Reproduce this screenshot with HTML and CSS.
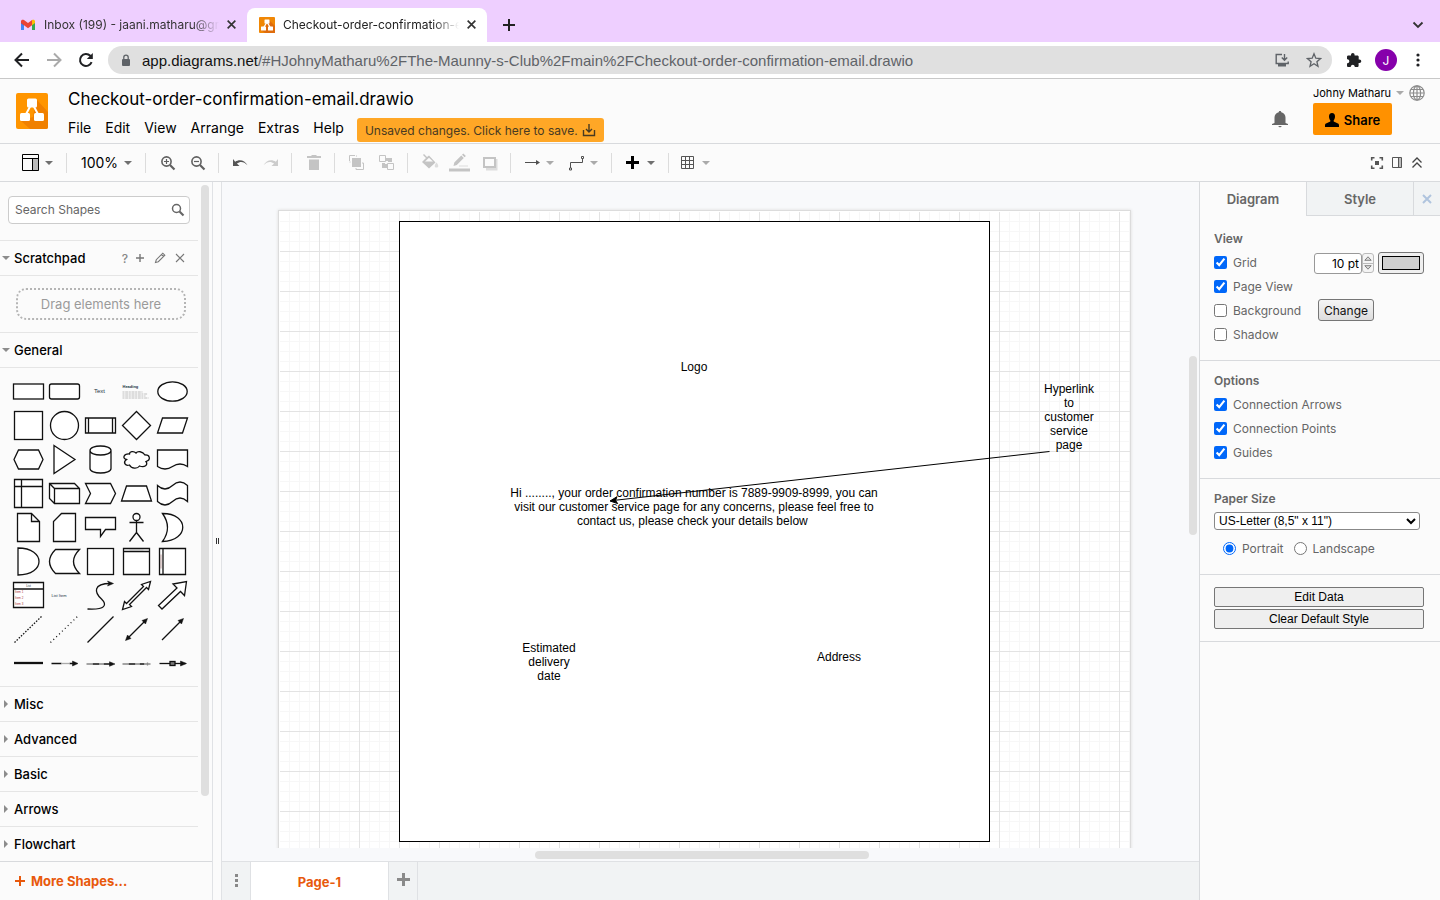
FILE: index.html
```html
<!DOCTYPE html>
<html lang="en">
<head>
<meta charset="utf-8">
<title>Checkout-order-confirmation-email.drawio</title>
<link rel="stylesheet" href="styles.css">
</head>
<body>
<div class="window">
  <div class="tabstrip">
    <div class="tab">
      <svg class="favicon" viewBox="0 0 16 16"><path d="M1 4v9h3V7z" fill="#4285f4"/><path d="M12 7v6h3V4z" fill="#34a853"/><path d="M1 4.200V6l3 2.200V4.600z" fill="#c5221f"/><path d="M1 4.200C1 2.600 2.800 2.200 4 3.100l4 3 4-3v5.100l-4 3-4-3L1 6z" fill="#ea4335"/><path d="M12 3.100v5.100l3-2.200V4.200C15 2.600 13.200 2.200 12 3.100z" fill="#fbbc04"/></svg>
      <span class="tab-title">Inbox (199) - jaani.matharu@gmail.com</span>
      <button class="tab-close" aria-label="Close tab"><svg viewBox="0 0 10 10"><path d="M1.500 1.500l7 7M8.500 1.500l-7 7"/></svg></button>
    </div>
    <div class="tab active">
      <svg class="favicon" viewBox="0 0 16 16"><rect width="16" height="16" rx="1" fill="#f08705"/><path d="M10 3l6 6v7H6l-4-3z" fill="#df6c0c"/><path d="M8 5L4.500 11M8 5l3.500 6" stroke="#fff" stroke-width="1.300"/><rect x="5.500" y="2.500" width="5" height="4" rx=".5" fill="#fff"/><rect x="2" y="9.500" width="5" height="4" rx=".5" fill="#fff"/><rect x="9" y="9.500" width="5" height="4" rx=".5" fill="#fff"/></svg>
      <span class="tab-title">Checkout-order-confirmation-email.drawio</span>
      <button class="tab-close" aria-label="Close tab"><svg viewBox="0 0 10 10"><path d="M1.500 1.500l7 7M8.500 1.500l-7 7"/></svg></button>
    </div>
    <button class="new-tab" aria-label="New tab"><svg viewBox="0 0 14 14"><path d="M7 1v12M1 7h12"/></svg></button>
    <button class="tab-search" aria-label="Search tabs"><svg viewBox="0 0 12 8"><path d="M1.500 1.500L6 6l4.500-4.500"/></svg></button>
  </div>

  <div class="addressbar">
    <button class="nav" aria-label="Back"><svg viewBox="0 0 16 16"><path d="M15 8H2M8 1.500L1.500 8 8 14.500"/></svg></button>
    <button class="nav off" aria-label="Forward"><svg viewBox="0 0 16 16"><path d="M1 8h13M8 1.500L14.500 8 8 14.500"/></svg></button>
    <button class="nav" aria-label="Reload"><svg viewBox="0 0 16 16"><path d="M13.600 10.200A6 6 0 1 1 12.300 3.800L13.500 5"/><path d="M14.800 1v6H8.800z" fill="#202124" stroke="none"/></svg></button>
    <div class="omnibox">
      <svg class="lock" viewBox="0 0 10 13"><rect x="1" y="5" width="8" height="7" rx="1" fill="#5f6368"/><path d="M2.800 5V3.300a2.200 2.200 0 0 1 4.400 0V5" fill="none" stroke="#5f6368" stroke-width="1.300"/></svg>
      <span class="url"><b>app.diagrams.net</b>/#HJohnyMatharu%2FThe-Maunny-s-Club%2Fmain%2FCheckout-order-confirmation-email.drawio</span>
      <svg class="omni-icon" viewBox="0 0 16 16"><path d="M8 2.500H2.200v9h12V9.500M10.500 2v6M7.800 5.500l2.700 2.700 2.700-2.700" fill="none" stroke="#5f6368" stroke-width="1.400"/><rect x="4" y="12" width="8" height="2.500" fill="#5f6368"/></svg>
      <svg class="omni-icon" viewBox="0 0 16 16"><path d="M8 1.800l1.800 4.400 4.700.4-3.600 3.100 1.100 4.600L8 11.800l-4 2.500 1.100-4.600L1.500 6.600l4.700-.4z" fill="none" stroke="#5f6368" stroke-width="1.300"/></svg>
    </div>
    <button class="nav" aria-label="Extensions"><svg viewBox="0 0 16 16"><path d="M13.500 7.500h-.8V4.800c0-.7-.6-1.300-1.300-1.300H8.600v-.8a1.800 1.800 0 0 0-3.600 0v.8H2.300C1.600 3.500 1 4.100 1 4.800v2.500h.8a2 2 0 0 1 0 3.900H1v2.500c0 .7.600 1.300 1.300 1.300h2.500v-.8a2 2 0 0 1 3.900 0v.8h2.600c.7 0 1.300-.6 1.300-1.300v-2.600h.9a1.800 1.800 0 0 0 0-3.600z" fill="#202124" stroke="none"/></svg></button>
    <button class="avatar" aria-label="Profile">J</button>
    <button class="nav" aria-label="Browser menu"><svg viewBox="0 0 16 16"><g fill="#202124" stroke="none"><circle cx="8" cy="3" r="1.600"/><circle cx="8" cy="8" r="1.600"/><circle cx="8" cy="13" r="1.600"/></g></svg></button>
  </div>

  <header class="app-header">
    <svg class="logo" viewBox="0 0 32 36"><rect width="32" height="36" rx="2" fill="#ff9500"/><path d="M20 6l12 13v15a2 2 0 0 1-2 2H14L5 28l12-4z" fill="#f08000"/><path d="M16 10L9 23M16 10l7 13" stroke="#fff" stroke-width="2"/><rect x="11" y="5.500" width="10" height="9" rx="1.500" fill="#fff"/><rect x="4" y="20" width="10" height="8" rx="1.500" fill="#fff"/><rect x="18" y="20" width="10" height="8" rx="1.500" fill="#fff"/></svg>
    <div class="titles">
      <h1>Checkout-order-confirmation-email.drawio</h1>
      <nav class="menu">
        <a href="#">File</a><a href="#">Edit</a><a href="#">View</a><a href="#">Arrange</a><a href="#">Extras</a><a href="#">Help</a>
        <button class="save-note">Unsaved changes. Click here to save.<svg viewBox="0 0 14 14"><path d="M1.500 7v5.500h11V7M7 1v8M4 6l3 3 3-3"/></svg></button>
      </nav>
    </div>
    <svg class="bell" viewBox="0 0 16 18"><path d="M8 1c.8 0 1.200.5 1.300 1.200C12 2.800 13.500 5 13.500 7.500V13l2.500 1v1H0v-1l2.500-1V7.500C2.500 5 4 2.800 6.700 2.200 6.800 1.500 7.200 1 8 1zM6 16h4l-2 1.600z" fill="#666"/></svg>
    <div class="account">
      <div class="user"><a href="#">Johny Matharu</a><svg class="user-caret" viewBox="0 0 8 4"><path d="M0 0h8L4 4z" fill="#aaa"/></svg>
        <svg class="globe" viewBox="0 0 16 16"><g fill="none" stroke="#8c8c8c" stroke-width="1.200"><circle cx="8" cy="8" r="7.200"/><ellipse cx="8" cy="8" rx="3.600" ry="7.200"/><path d="M8 1v14M1 8h14M2 4.500h12M2 11.500h12"/></g></svg></div>
      <button class="share"><svg viewBox="0 0 14 14"><path d="M7 0c2 0 3 1.500 3 3.500C10 5.500 9.300 6.600 8.700 7.200v1.300L13 10.500c.7.400 1 1 1 2V14H0v-1.500c0-1 .3-1.600 1-2l4.300-2V7.200C4.700 6.600 4 5.500 4 3.500 4 1.500 5 0 7 0z"/></svg>Share</button>
    </div>
  </header>

  <div class="toolbar">
    <button class="drop view" aria-label="View layout"><svg viewBox="0 0 46 30"><rect x="18" y="11" width="6" height="12" fill="#bbb"/><path d="M7.500 6.500h16v16h-16zM7.500 10.500h16M17.500 10.500v12" fill="none" stroke="#000"/><path d="M30 13h8l-4 4z" fill="#707070"/></svg></button>
    <i class="sep"></i>
    <button class="zoom-level">100%<svg viewBox="0 0 8 4"><path d="M0 0h8L4 4z" fill="#707070"/></svg></button>
    <i class="sep"></i>
    <button class="tool" aria-label="Zoom in"><svg viewBox="0 0 30 30"><g fill="none" stroke="#606060"><circle cx="13.500" cy="13.500" r="4.600" stroke-width="1.600"/><path d="M17 17l4.500 4.500" stroke-width="2.200"/><path d="M11 13.500h5M13.500 11v5" stroke-width="1.200"/></g></svg></button>
    <button class="tool" aria-label="Zoom out"><svg viewBox="0 0 30 30"><g fill="none" stroke="#606060"><circle cx="13.500" cy="13.500" r="4.600" stroke-width="1.600"/><path d="M17 17l4.500 4.500" stroke-width="2.200"/><path d="M11 13.500h5" stroke-width="1.200"/></g></svg></button>
    <i class="sep"></i>
    <button class="tool" aria-label="Undo"><svg viewBox="0 0 30 30"><path d="M7 11v7h6.500l-2.600-2.400c3.500-2.800 7.200-2 10.600 1.700-2.600-5-8-6.700-12.300-3.600z" fill="#555"/></svg></button>
    <button class="tool" aria-label="Redo"><svg viewBox="0 0 30 30"><path d="M22 11v7h-6.500l2.600-2.400c-3.500-2.800-7.200-2-10.600 1.700 2.600-5 8-6.700 12.300-3.600z" fill="#ccc"/></svg></button>
    <i class="sep"></i>
    <button class="tool" aria-label="Delete"><svg viewBox="0 0 30 30"><path d="M8 8h4l1-1h4l1 1h4v2H8zM10 11.500h10V22H10z" fill="#c4c4c4"/></svg></button>
    <i class="sep"></i>
    <button class="tool" aria-label="To front"><svg viewBox="0 0 30 30"><rect x="10" y="10" width="9" height="9" fill="#c4c4c4"/><path d="M7.500 13V7.500H13M16 21.500h5.500V16M14.500 7.500v1M7.500 14h1M14 20v1.500h2M20 15h1.500v2" fill="none" stroke="#c4c4c4"/></svg></button>
    <button class="tool" aria-label="To back"><svg viewBox="0 0 30 30"><path d="M14 10h6v4h-4v-1h-2zM10 15h3v1h2v4h-5z" fill="#c4c4c4"/><path d="M7.500 7.500h6v6h-6zM15.500 15.500h6v6h-6z" fill="none" stroke="#c4c4c4"/></svg></button>
    <i class="sep"></i>
    <button class="tool" aria-label="Fill color"><svg viewBox="0 0 30 30"><path d="M9 6l3 3 2-1.500 6.500 7L14 20.500 7 14l4-4-3-3z" fill="#c4c4c4"/><path d="M10 13.500h8L14 9.800z" fill="#fbfbfb"/><path d="M21.500 14.500c2.500 3 2.200 5 0 5s-2.500-2 0-5z" fill="#ddd"/></svg></button>
    <button class="tool" aria-label="Line color"><svg viewBox="0 0 30 30"><path d="M8.500 18l.8-3.500 7-7 2.500 2.500-7 7zM17 6.800l1.300-1.300 2.600 2.500-1.300 1.300z" fill="#c4c4c4"/><path d="M14 18h9" stroke="#ddd"/><path d="M4 20.500h21v3H4z" fill="#c4c4c4"/></svg></button>
    <button class="tool" aria-label="Shadow"><svg viewBox="0 0 30 30"><path d="M11 20h9v-9h2.500v11.500H11z" fill="#ddd"/><rect x="9" y="10" width="11" height="9" fill="none" stroke="#c4c4c4" stroke-width="2"/></svg></button>
    <i class="sep"></i>
    <button class="drop" aria-label="Connection"><svg viewBox="0 0 44 30"><path d="M7 14.500h13" stroke="#505050"/><path d="M18 12l4 2.500-4 2.500z" fill="#505050"/><path d="M28 13h8l-4 4z" fill="#aaa"/></svg></button>
    <button class="drop" aria-label="Waypoints"><svg viewBox="0 0 44 30"><path d="M8.500 20v-5.500h12V11M7.500 20h2v2h-2zM19.500 8.500h2v2h-2z" fill="none" stroke="#505050"/><path d="M28 13h8l-4 4z" fill="#aaa"/></svg></button>
    <i class="sep"></i>
    <button class="drop" aria-label="Insert"><svg viewBox="0 0 44 30"><path d="M7 14.500h13M13.500 8v13" stroke="#000" stroke-width="3"/><path d="M28 13h8l-4 4z" fill="#707070"/></svg></button>
    <i class="sep"></i>
    <button class="drop" aria-label="Table"><svg viewBox="0 0 44 30"><path d="M5.500 8.500h12v12h-12zM9.500 8.500v12M13.500 8.500v12M5.500 12.500h12M5.500 16.500h12" fill="none" stroke="#555"/><path d="M26 13h8l-4 4z" fill="#aaa"/></svg></button>
    <div class="toolbar-end">
      <button aria-label="Fullscreen"><svg viewBox="0 0 14 14"><path d="M1.700 4.500V1.700h2.800M9.500 1.700h2.800v2.800M12.300 9.500v2.800H9.500M4.500 12.300H1.700V9.500" fill="none" stroke="#555" stroke-width="1.600"/><path d="M5 5h4v4H5z" fill="#555"/></svg></button>
      <button aria-label="Format panel"><svg viewBox="0 0 14 14"><path d="M9 2h3v10H9z" fill="#bbb"/><path d="M2.500 1.500h9v10h-9zM8.500 1.500v10" fill="none" stroke="#555"/></svg></button>
      <button aria-label="Collapse"><svg viewBox="0 0 14 14"><path d="M2.500 6.500L7 2 11.500 6.500M2.500 11.500L7 7 11.500 11.500" fill="none" stroke="#444" stroke-width="1.300"/></svg></button>
    </div>
  </div>

  <main class="workspace">
    <aside class="sidebar">
      <div class="sidebar-scroll">
        <div class="search"><input type="text" placeholder="Search Shapes" aria-label="Search Shapes"><svg viewBox="0 0 14 14"><circle cx="5.500" cy="5.500" r="4" fill="none" stroke="#666" stroke-width="1.500"/><path d="M8.500 8.500l4 4" stroke="#666" stroke-width="2.200"/></svg></div>
        <div class="section-head"><svg class="tri" viewBox="0 0 8 8"><path d="M0 2h8L4 6z"/></svg><span>Scratchpad</span>
          <div class="head-tools"><button>?</button>
            <button aria-label="Add"><svg viewBox="0 0 12 12"><path d="M6 2v8M2 6h8" stroke-width="1.400"/></svg></button>
            <button aria-label="Edit"><svg viewBox="0 0 12 12"><path d="M1.500 10.500l.8-2.800L8.800 1.200l2 2-6.500 6.500zM7.500 2.500l2 2" /></svg></button>
            <button aria-label="Close"><svg viewBox="0 0 12 12"><path d="M2 2l8 8M10 2l-8 8"/></svg></button></div>
        </div>
        <div class="drop-area">Drag elements here</div>
        <div class="section-head"><svg class="tri" viewBox="0 0 8 8"><path d="M0 2h8L4 6z"/></svg><span>General</span></div>
        <div class="shapes">
          <svg viewBox="-18.500 -17.500 36 34"><rect x="-15" y="-7.500" width="30" height="15"/></svg>
          <svg viewBox="-18.500 -17.500 36 34"><rect x="-15" y="-7.500" width="30" height="15" rx="2"/></svg>
          <svg viewBox="-18.500 -17.500 36 34"><text x="-1" y="1.500" text-anchor="middle" font-size="6">Text</text></svg>
          <svg viewBox="-18.500 -17.500 36 34"><text x="-14" y="-4" font-size="4" font-weight="700">Heading</text><path d="M-14 .5h20M-14 2.500h25M-14 4.500h23M-14 6.500h26" stroke="#999" stroke-width=".6" stroke-dasharray="2 .7 3 .6"/></svg>
          <svg viewBox="-18.500 -17.500 36 34"><ellipse rx="14.700" ry="9.700"/></svg>

          <svg viewBox="-18.500 -17.500 36 34"><rect x="-14" y="-14" width="28" height="28"/></svg>
          <svg viewBox="-18.500 -17.500 36 34"><circle r="14"/></svg>
          <svg viewBox="-18.500 -17.500 36 34"><path d="M-15-7.500h30v15h-30zM-12-7.500v15M12-7.500v15"/></svg>
          <svg viewBox="-18.500 -17.500 36 34"><path d="M0-14L14 0 0 14-14 0z"/></svg>
          <svg viewBox="-18.500 -17.500 36 34"><path d="M-10-7.500h25l-5 15h-25z"/></svg>

          <svg viewBox="-18.500 -17.500 36 34"><path d="M-10-9.500h20l4.500 9.500-4.500 9.500h-20L-14.500 0z"/></svg>
          <svg viewBox="-18.500 -17.500 36 34"><path d="M-10.500-14L10.500 0-10.500 14z"/></svg>
          <svg viewBox="-18.500 -17.500 36 34"><path d="M-10.500-9v18c0 6 21 6 21 0v-18c0-6-21-6-21 0c0 6 21 6 21 0"/></svg>
          <svg viewBox="-18.500 -17.500 36 34"><path d="M-7-5.500C-13-6-14.500-1-10 0c-4 3-1 7 3 5.500 2 4 8 4 10 1 5 2 9-1 6.500-4.500C15 0 13-5 8.500-4.500 6-8.500 1-8.500-.5-6.500-3-9-7-8-7-5.500z"/></svg>
          <svg viewBox="-18.500 -17.500 36 34"><path d="M-15-9.500h30V7Q7.500 2 0 7t-15 0z"/></svg>

          <svg viewBox="-18.500 -17.500 36 34"><path d="M-14-14h28v28h-28zM-7-14v28M-14-7h28"/></svg>
          <svg viewBox="-18.500 -17.500 36 34"><path d="M-15-10h25l5 5v15h-25l-5-5zM-15-10l5 5h25M-10-5v15"/></svg>
          <svg viewBox="-18.500 -17.500 36 34"><path d="M-15-10h25l5 10-5 10h-25l5-10z"/></svg>
          <svg viewBox="-18.500 -17.500 36 34"><path d="M-10-7.500h20l5 15h-30z"/></svg>
          <svg viewBox="-18.500 -17.500 36 34"><path d="M-15-8Q-7.500-1 0-8T15-8V8Q7.500 1 0 8t-15 0z"/></svg>

          <svg viewBox="-18.500 -17.500 36 34"><path d="M-11-14H3l8 8v20h-22zM3-14v8h8"/></svg>
          <svg viewBox="-18.500 -17.500 36 34"><path d="M-3-14h14v28h-22V-6z"/></svg>
          <svg viewBox="-18.500 -17.500 36 34"><path d="M-15-10h30V2H5L0 9V2h-15z"/></svg>
          <svg viewBox="-18.500 -17.500 36 34"><circle cy="-10.500" r="3.500"/><path d="M0-7V5M-7-5H7M0 5l-7 9M0 5l7 9"/></svg>
          <svg viewBox="-18.500 -17.500 36 34"><path d="M-10-14C17-14 17 13-10 14Q0 0-10-14z"/></svg>

          <svg viewBox="-18.500 -17.500 36 34"><path d="M-10.500-13.500c28 0 28 27 0 27z"/></svg>
          <svg viewBox="-18.500 -17.500 36 34"><path d="M-9-12h24Q3 0 15 12H-9Q-21 0-9-12z"/></svg>
          <svg viewBox="-18.500 -17.500 36 34"><rect x="-13" y="-13" width="26" height="26"/></svg>
          <svg viewBox="-18.500 -17.500 36 34"><path d="M-13-13h26v26h-26zM-13-10h26"/><path d="M-7-11.500H7" stroke="#999" stroke-width=".6"/></svg>
          <svg viewBox="-18.500 -17.500 36 34"><path d="M-13-13h26v26h-26zM-9.500-13v26"/><path d="M-11.500-7V7" stroke="#966" stroke-width=".6"/></svg>

          <svg viewBox="-18.500 -17.500 36 34"><path d="M-15-13h30v25h-30zM-15-6.500h30"/><text x="0" y="-8.500" text-anchor="middle" font-size="3">List</text><g class="items" font-size="3"><text x="-13.500" y="-2.500">Item 1</text><text x="-13.500" y="3.500">Item 2</text><text x="-13.500" y="9.500">Item 3</text></g></svg>
          <svg viewBox="-18.500 -17.500 36 34"><text x="-13" y="1.500" font-size="4">List Item</text></svg>
          <svg viewBox="-18.500 -17.500 36 34"><path class="open" d="M-13 13.500c18 1 20-4 14-10C-6-3-8-12 10-12"/><path class="solid" d="M13-12l-6-2.500 1.500 2.500L7-9.500z"/></svg>
          <svg viewBox="-18.500 -17.500 36 34"><path d="M14-14l-2 8-2-2L-7 9l2 2-9 3 2-8 2 2L7-9l-2-2z"/></svg>
          <svg viewBox="-18.500 -17.500 36 34"><path d="M14-14l-2 14-4-4-18.500 17.500-3.500-3.500L4.500-7.500.5-11.500z"/></svg>

          <svg viewBox="-18.500 -17.500 36 34"><path d="M-14 13L13-13" stroke-dasharray="1.500 1.500"/></svg>
          <svg viewBox="-18.500 -17.500 36 34"><path d="M-14 13L13-13" stroke-dasharray="1 3"/></svg>
          <svg viewBox="-18.500 -17.500 36 34"><path d="M-13 13L13-13"/></svg>
          <svg viewBox="-18.500 -17.500 36 34"><path d="M-9 9L9-9"/><path class="solid" d="M11-11l-5.500 2L9-5.500zM-11 11l5.500-2L-9 5.500z"/></svg>
          <svg viewBox="-18.500 -17.500 36 34"><path d="M-10.500 10.500L9-9"/><path class="solid" d="M11-11l-5.500 2L9-5.500z"/></svg>

          <svg viewBox="-18.500 -17.500 36 34"><path d="M-14.500-.5h29" stroke-width="2.300"/></svg>
          <svg viewBox="-18.500 -17.500 36 34"><path d="M-13 0h10M5 0h6"/><path d="M-3 0h8" stroke="#aaa"/><path class="solid" d="M13.500 0L8-2.500V2.500z"/></svg>
          <svg viewBox="-18.500 -17.500 36 34"><path d="M-8 .5h7M3 .5h8"/><path d="M-14 .5h6M-1 .5h4" stroke="#888"/><path class="solid" d="M14.500.5L9-1.800V2.800z"/></svg>
          <svg viewBox="-18.500 -17.500 36 34"><path d="M-8 .5h7M3 .5h5"/><path d="M-14 .5h6M-1 .5h4M8 .5h6M11-1v3" stroke="#888"/></svg>
          <svg viewBox="-18.500 -17.500 36 34"><path d="M-13 0h26"/><rect x="-2.500" y="-2" width="5" height="4" fill="#777"/><path class="solid" d="M14 0L8-2.500V2.500z"/></svg>
        </div>
        <div class="section-head"><svg class="tri" viewBox="0 0 8 8"><path d="M2 0l4 4-4 4z"/></svg><span>Misc</span></div>
        <div class="section-head"><svg class="tri" viewBox="0 0 8 8"><path d="M2 0l4 4-4 4z"/></svg><span>Advanced</span></div>
        <div class="section-head"><svg class="tri" viewBox="0 0 8 8"><path d="M2 0l4 4-4 4z"/></svg><span>Basic</span></div>
        <div class="section-head"><svg class="tri" viewBox="0 0 8 8"><path d="M2 0l4 4-4 4z"/></svg><span>Arrows</span></div>
        <div class="section-head"><svg class="tri" viewBox="0 0 8 8"><path d="M2 0l4 4-4 4z"/></svg><span>Flowchart</span></div>
      </div>
      <div class="scroll-thumb side"></div>
      <button class="more"><svg viewBox="0 0 10 10"><path d="M5 0v10M0 5h10"/></svg>More Shapes...</button>
    </aside>
    <div class="splitter"><i></i><i></i></div>

    <section class="center">
      <div class="canvas">
        <div class="viewport">
          <div class="paper">
            <div class="frame"></div>
            <p class="node logo-text">Logo</p>
            <p class="node link-text">Hyperlink to customer service page</p>
            <p class="node body-text">Hi ........, your order confirmation number is 7889-9909-8999, you can visit our customer service page for any concerns, please feel free to contact us, please check your details below&nbsp;</p>
            <p class="node date-text">Estimated delivery date</p>
            <p class="node address-text">Address</p>
            <svg class="edge" viewBox="0 0 850 640"><path d="M770.500 240.500L334 289.500" stroke="#000"/><path d="M331 290l7-4.300-1.500 3.700 2.200 3.200z" stroke="#000"/></svg>
          </div>
        </div>
        <div class="scroll-thumb vert"></div>
        <div class="scroll-thumb horiz"></div>
      </div>
      <div class="pagebar">
        <button class="page-menu" aria-label="Pages"><svg viewBox="0 0 4 14"><path d="M1 0h3v3H1zM1 5h3v3H1zM1 10h3v3H1z"/></svg></button>
        <button class="page-tab">Page-1</button>
        <button class="page-add" aria-label="Insert page"><svg viewBox="0 0 14 14"><path d="M7.500 0v13M1 6.500h13" stroke="#8a8a8a" stroke-width="3"/></svg></button>
      </div>
    </section>

    <aside class="format">
      <div class="format-tabs"><button class="on">Diagram</button><button>Style</button><button class="x" aria-label="Close panel"><svg viewBox="0 0 10 10"><path d="M1 1l8 8M9 1l-8 8"/></svg></button></div>
      <section class="view-set">
        <h2>View</h2>
        <div class="row"><label><input type="checkbox" checked>Grid</label>
          <span class="grid-set"><input class="size" type="text" value="10 pt" aria-label="Grid size"><span class="spin"><button aria-label="Increase"><svg viewBox="0 0 8 5"><path d="M.8 4.300h6.400L4 .8z"/></svg></button><button aria-label="Decrease"><svg viewBox="0 0 8 5"><path d="M.8.7h6.400L4 4.200z"/></svg></button></span><button class="swatch" aria-label="Grid color"><i></i></button></span></div>
        <div class="row"><label><input type="checkbox" checked>Page View</label></div>
        <div class="row"><label><input type="checkbox">Background</label><button class="change">Change</button></div>
        <div class="row"><label><input type="checkbox">Shadow</label></div>
      </section>
      <section>
        <h2>Options</h2>
        <div class="row"><label><input type="checkbox" checked>Connection Arrows</label></div>
        <div class="row"><label><input type="checkbox" checked>Connection Points</label></div>
        <div class="row"><label><input type="checkbox" checked>Guides</label></div>
      </section>
      <section>
        <h2 id="paper">Paper Size</h2>
        <select aria-labelledby="paper"><option>US-Letter (8,5" x 11")</option></select>
        <div class="row radios"><label><input type="radio" name="o" checked>Portrait</label><label><input type="radio" name="o">Landscape</label></div>
      </section>
      <section class="actions"><button>Edit Data</button><button>Clear Default Style</button></section>
    </aside>
  </main>
</div>
</body>
</html>
```
FILE: styles.css
```css
* { box-sizing: border-box; }
body { margin: 0; font-family: Inter, "Liberation Sans", sans-serif; color: #000; background: #fbfbfb; }
button { font: inherit; color: inherit; border: 0; padding: 0; background: none; }
a { color: inherit; text-decoration: none; }
svg { display: block; flex: none; }
h1, h2, p { margin: 0; }

.window { height: 100vh; display: flex; flex-direction: column; overflow: hidden; }

/* browser chrome */
.tabstrip { flex: none; height: 42px; padding: 8px 16px 0 7px; display: flex; background: #eecfff; }
.tab { width: 240px; padding: 0 10px 1px 13px; display: flex; align-items: center; font-size: 12px; color: #333; }
.tab.active { padding-left: 12px; background: #fff; border-radius: 8px 8px 0 0; color: #222; }
.favicon { width: 16px; height: 16px; margin-right: 8px; }
.tab-title { flex: 1; min-width: 0; overflow: hidden; white-space: nowrap; mask-image: linear-gradient(to right, #000 85%, transparent); }
.tab-close { width: 14px; display: flex; justify-content: flex-end; margin-left: 4px; }
.tab-close svg { width: 11px; height: 11px; stroke: #333; stroke-width: 1.5; fill: none; }
.new-tab { width: 14px; margin-left: 15px; }
.new-tab svg { width: 14px; height: 14px; stroke: #222; stroke-width: 2; }
.tab-search { margin-left: auto; }
.tab-search svg { width: 12px; height: 8px; fill: none; stroke: #333; stroke-width: 1.8; }
.addressbar { flex: none; height: 37px; padding: 0 14px; display: flex; align-items: center; gap: 16px; background: #fff; border-bottom: 1px solid #c8c8c8; }
.nav svg { width: 16px; height: 16px; fill: none; stroke: #202124; stroke-width: 2; }
.nav.off svg { stroke: #aaa; }
.omnibox { flex: 1; height: 28px; margin: 0 -2px 0 -2px; padding: 0 10px 0 13px; display: flex; align-items: center; border-radius: 14px; background: #e0e0e0; font: 15px "Liberation Sans", Arial, sans-serif; color: #5f6368; }
.omnibox b { font-weight: 400; color: #111; }
.lock { width: 10px; height: 13px; margin-right: 11px; }
.url { flex: 1; white-space: nowrap; overflow: hidden; }
.omni-icon { width: 16px; height: 16px; margin-left: 16px; }
.avatar { width: 22px; height: 22px; margin: 0 -3px; border-radius: 50%; background: #8600ab; color: #fff; font-size: 12px; }

/* document header */
.app-header { flex: none; height: 65px; padding: 7px 17px 0 16px; display: flex; border-bottom: 1px solid #d8dadd; }
.logo { width: 32px; height: 36px; margin: 7px 20px 0 0; }
.titles { flex: 1; }
h1 { font-size: 17px; font-weight: 400; line-height: 26px; }
.menu { display: flex; align-items: center; gap: 14px; height: 24px; margin-top: 3px; font-size: 14px; }
.save-note { height: 24px; margin: 6px 0 0 -1px; padding: 0 8px; display: flex; align-items: center; gap: 4px; border-radius: 3px; background: #ffa726; color: #483a22; font-size: 12px; }
.save-note svg { width: 14px; height: 14px; fill: none; stroke: #483a22; stroke-width: 1.4; }
.bell { width: 16px; height: 18px; margin: 24px 25px 0 0; }
.account { width: 110px; }
.user { display: flex; align-items: center; justify-content: space-between; height: 17px; margin-right: -2px; padding-bottom: 3px; font-size: 11px; }
.user-caret { width: 8px; height: 4px; }
.globe { width: 16px; height: 16px; }
.share { width: 79px; height: 32px; padding-top: 1px; display: flex; align-items: center; justify-content: center; gap: 5px; border-radius: 2px; background: #ff9100; font-size: 13px; font-weight: 600; }
.share svg { width: 14px; height: 14px; }

/* toolbar */
.toolbar { flex: none; height: 38px; padding: 0 16px 0 15px; display: flex; align-items: center; border-bottom: 1px solid #d8dadd; }
.sep { flex: none; width: 1px; height: 20px; margin: 0 7px 0 5px; background: #dcdcdc; }
.tool svg { width: 30px; height: 30px; }
.drop svg { width: 44px; height: 30px; }
.drop.view svg { width: 46px; }
.drop.view { margin-right: 0; }
.zoom-level { width: 66px; padding: 0 8px 0 7px; display: flex; align-items: center; justify-content: space-between; font-size: 14px; }
.zoom-level svg { width: 8px; height: 4px; }
.toolbar-end { margin-left: auto; display: flex; gap: 6px; }
.toolbar-end svg { width: 14px; height: 14px; }

/* shape sidebar */
.workspace { flex: 1; min-height: 0; display: flex; }
.sidebar { flex: none; width: 212px; display: flex; flex-direction: column; position: relative; }
.sidebar-scroll { flex: 1; min-height: 0; overflow: hidden; width: 198px; }
.search { margin: 14px 8px 16px; height: 28px; width: 182px; display: flex; align-items: center; padding: 0 4px 1px 0; border: 1px solid #ccc; border-radius: 4px; background: #fff; }
.search input { flex: 1; min-width: 0; border: 0; padding: 0 6px; outline: 0; background: none; font: 12px Inter, sans-serif; }
.search input::placeholder { color: #666; }
.search svg { width: 14px; height: 14px; }
.section-head { height: 35px; padding: 0 12px 0 2px; display: flex; align-items: center; gap: 4px; border-top: 1px solid #e5e5e5; font-size: 13px; font-weight: 500; }
.tri { width: 8px; height: 8px; fill: #8c8c8c; }
.head-tools { margin-left: auto; display: flex; align-items: center; gap: 8px; color: #888; font-size: 12px; }
.head-tools svg { width: 12px; height: 12px; fill: none; stroke: #777; stroke-width: 1.1; }
.head-tools button:first-child { margin-right: -2px; }
.drop-area { position: relative; height: 57px; padding: 12px 12px 12px 16px; border-top: 1px solid #e5e5e5; display: grid; place-items: center; font-size: 13px; color: #9a9a9a; }
.drop-area::before { content: ""; position: absolute; inset: 12px 12px 12px 16px; border: 2px dotted #b5b5b5; border-radius: 10px; }
.shapes { padding: 6px 0 6px 10px; display: grid; grid-template-columns: repeat(5, 36px); border-top: 1px solid #e5e5e5; font-family: "Liberation Sans", sans-serif; }
.shapes svg { width: 36px; height: 34px; fill: #fff; stroke: #111; stroke-width: 1.3; }
.shapes text { fill: #234; stroke: none; }
.shapes .items text { fill: #a33; }
.shapes .open { fill: none; }
.shapes .solid { fill: #111; stroke-width: .5; }
.scroll-thumb { position: absolute; border-radius: 4px; background: #dfdfdf; }
.scroll-thumb.side { top: 3px; right: 3px; width: 8px; height: 611px; }
.more { flex: none; height: 39px; padding-left: 15px; display: flex; align-items: center; gap: 6px; border-top: 1px solid #d8dadd; color: #e8590c; font-size: 13px; font-weight: 700; }
.more svg { width: 10px; height: 10px; stroke: #e8590c; stroke-width: 2; }
.splitter { flex: none; width: 10px; border: solid #e0e2e5; border-width: 0 1px; display: flex; align-items: center; justify-content: center; gap: 1px; }
.splitter i { width: 1px; height: 6px; background: #333; }

/* drawing canvas */
.center { flex: 1; min-width: 0; display: flex; flex-direction: column; }
.canvas { flex: 1; min-height: 0; position: relative; padding-bottom: 13px; background: #f8f9fb; }
.viewport { height: 100%; overflow: hidden; position: relative; }
.paper { position: absolute; left: 57px; top: 29px; width: 851px; height: 1100px; box-shadow: 0 0 0 1px #dcdcdc, 0 0 3px 1px #ddd;
  background:
    linear-gradient(#fff, #fff) 0 0 / 100% 1px no-repeat,
    linear-gradient(#fff, #fff) 0 0 / 1px 100% no-repeat,
    linear-gradient(to right, #e3e3e3 1px, transparent 1px) 0 0 / 40px 40px,
    linear-gradient(#e3e3e3 1px, transparent 1px) 0 0 / 40px 40px,
    linear-gradient(to right, #f7f7f7 1px, transparent 1px) 0 0 / 10px 10px,
    linear-gradient(#f7f7f7 1px, transparent 1px) 0 0 / 10px 10px, #fff; }
.frame { position: absolute; left: 120px; top: 10px; width: 591px; height: 621px; border: 1px solid #000; background: #fff; }
.node { position: absolute; font: 12px/14px "Liberation Sans", Arial, sans-serif; text-align: center; }
.logo-text { left: 395px; top: 149px; width: 40px; }
.link-text { left: 760px; top: 171px; width: 60px; }
.body-text { left: 225px; top: 275px; width: 380px; }
.date-text { left: 240px; top: 430px; width: 60px; }
.address-text { left: 530px; top: 439px; width: 60px; }
.edge { position: absolute; left: 0; top: 0; width: 850px; height: 640px; }
.scroll-thumb.vert { right: 2px; top: 174px; width: 8px; height: 179px; }
.scroll-thumb.horiz { left: 313px; bottom: 2px; width: 334px; height: 8px; }
.pagebar { flex: none; height: 39px; display: flex; background: #f1f3f4; border-top: 1px solid #dfe1e4; }
.pagebar button { border-right: 1px solid #dfe1e4; display: flex; align-items: center; justify-content: center; }
.page-menu { width: 29px; }
.page-menu svg { width: 4px; height: 14px; fill: #888; }
.page-tab { width: 138px; padding-top: 2px; background: #fff; color: #e8590c; font-size: 13px; font-weight: 700; }
.page-add { width: 29px; }
.page-add svg { width: 14px; height: 14px; margin-bottom: 2px; }

/* format panel */
.format { flex: none; width: 241px; border-left: 1px solid #d8dadd; font-size: 12px; color: #666; }
.format-tabs { display: flex; height: 34px; }
.format-tabs button { flex: 1; border: solid #d8dadd; border-width: 0 0 1px 1px; background: #f1f3f4; font-size: 13px; font-weight: 600; }
.format-tabs .on { background: none; border: 0; }
.format-tabs .x { flex: none; width: 27px; display: grid; place-items: center; }
.x svg { width: 10px; height: 10px; stroke: #b0c4de; stroke-width: 2; }
.format section { padding: 10px 14px 14px; border-bottom: 1px solid #d8dadd; }
.format .view-set { padding-top: 13px; }
h2 { height: 20px; margin-bottom: 1px; font-size: 12px; line-height: 20px; font-weight: 600; }
.row { height: 24px; display: flex; align-items: center; justify-content: space-between; }
.row label { display: flex; align-items: center; gap: 6px; }
.row input[type="checkbox"], .row input[type="radio"] { width: 13px; height: 13px; margin: 0; accent-color: #0067f9; }
.grid-set { display: flex; align-items: center; margin: 2px 2px 0 0; }
.grid-set .size { width: 48px; height: 21px; padding: 1px 2px; border: 1px solid #999; border-radius: 3px; background: #fff; text-align: right; font: 12px Inter, sans-serif; color: #000; }
.spin { width: 12px; height: 20px; display: flex; flex-direction: column; border: 1px solid #bbb; border-radius: 3px; background: #f4f4f4; }
.spin button { flex: 1; display: grid; place-items: center; }
.spin button + button { border-top: 1px solid #bbb; }
.spin svg { width: 8px; height: 5px; fill: #ddd; stroke: #666; stroke-width: .8; }
.swatch { width: 46px; height: 22px; margin-left: 4px; padding: 3px; border: 1px solid #767676; border-radius: 3px; background: #efefef; }
.swatch i { display: block; height: 14px; border: 1px solid #000; background: #d0d0d0; }
.change { width: 56px; height: 22px; margin-right: 52px; border: 1px solid #767676; border-radius: 3px; background: linear-gradient(#f5f5f5, #ddd); color: #111; }
.format select { display: block; width: 206px; height: 18px; margin-top: 3px; padding: 0; border: 1px solid #888; border-radius: 3px; background: #fff; color: #000; font: 12px "Liberation Sans", sans-serif; }
.radios { margin-top: 6px; padding-left: 9px; justify-content: flex-start; gap: 10px; }
.actions { display: grid; gap: 2px; }
.format .actions { padding: 12px 16px 12px 14px; }
.actions button { height: 20px; border: 1px solid #767676; border-radius: 2px; background: #efefef; color: #000; font: 12px "Liberation Sans", sans-serif; }
```
